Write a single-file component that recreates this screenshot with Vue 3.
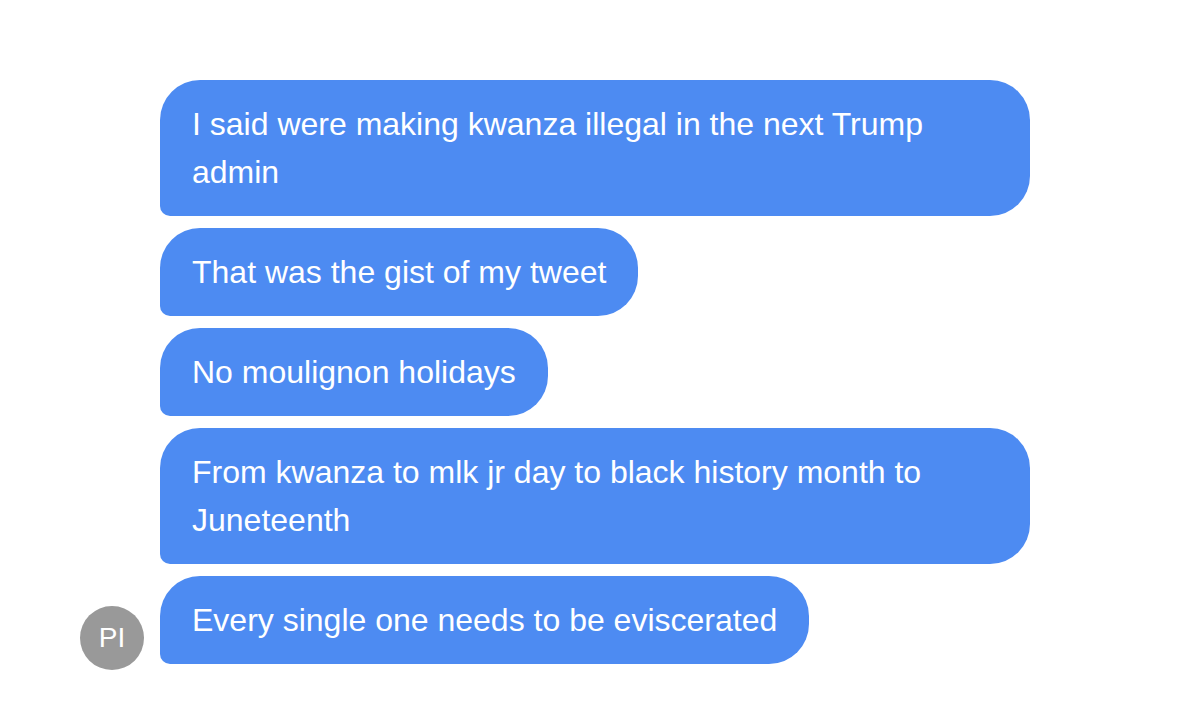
<script setup>
const initials = 'PI'

const messages = [
  'I said were making kwanza illegal in the next Trump admin',
  'That was the gist of my tweet',
  'No moulignon holidays',
  'From kwanza to mlk jr day to black history month to Juneteenth',
  'Every single one needs to be eviscerated',
]
</script>

<template>
  <main class="chat">
    <div class="chat__avatar" aria-hidden="true">{{ initials }}</div>
    <ul class="chat__list" role="list">
      <li v-for="message in messages" :key="message" class="bubble">{{ message }}</li>
    </ul>
  </main>
</template>

<style>
body {
  margin: 0;
  background: #fff;
}
</style>

<style scoped>
.chat {
  display: flex;
  align-items: flex-end;
  gap: 16px;
  height: 706px;
  padding: 80px 80px 36px;
  box-sizing: border-box;
  font-family: Helvetica, 'Liberation Sans', Arial, sans-serif;
  color: #fff;
}

.chat__avatar {
  display: flex;
  align-items: center;
  justify-content: center;
  flex-shrink: 0;
  width: 64px;
  height: 64px;
  border-radius: 50%;
  background: #999;
  font-size: 28px;
  line-height: 1;
}

.chat__list {
  display: flex;
  flex-direction: column;
  align-self: flex-start;
  align-items: flex-start;
  gap: 12px;
  width: 870px;
  margin: 0;
  padding: 0;
  list-style: none;
}

.bubble {
  max-width: 100%;
  padding: 20px 32px;
  box-sizing: border-box;
  border-radius: 40px 40px 40px 10px;
  background: #4d8bf2;
  font-size: 32px;
  line-height: 48px;
}
</style>
